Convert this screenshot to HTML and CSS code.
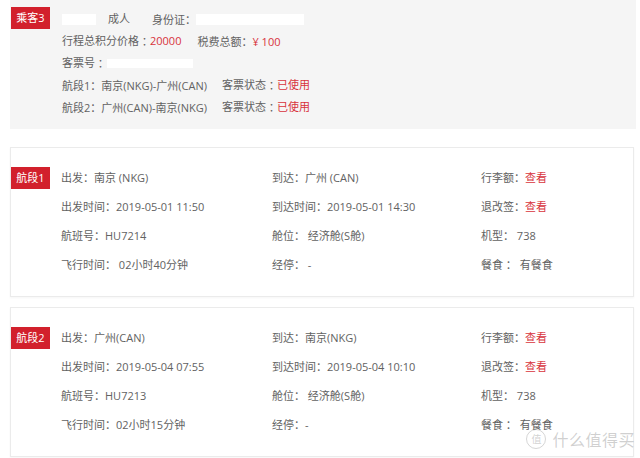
FILE: index.html
```html
<!DOCTYPE html>
<html lang="zh-CN">
<head>
<meta charset="utf-8">
<link rel="stylesheet" href="styles.css">
</head>
<body>
<div class="page">
  <section class="passenger">
    <div class="badge">乘客3</div>
    <div class="prows">
      <div class="prow"><span class="mask m1"></span><span class="gap1">成人</span><span class="gap2">身份证<span class="c">：</span></span><span class="mask m2"></span></div>
      <div class="prow">行程总积分价格<span class="c">：</span><span class="red">20000</span><span class="gap3">税费总额<span class="c">：</span><span class="red">¥ 100</span></span></div>
      <div class="prow">客票号<span class="c">：</span><span class="mask m3"></span></div>
      <div class="prow"><span class="seg">航段1<span class="c">：</span>南京(NKG)-广州(CAN)</span>客票状态<span class="c">：</span><span class="red">已使用</span></div>
      <div class="prow"><span class="seg">航段2<span class="c">：</span>广州(CAN)-南京(NKG)</span>客票状态<span class="c">：</span><span class="red">已使用</span></div>
    </div>
  </section>

  <section class="card">
    <div class="badge">航段1</div>
    <div class="grid">
      <div>出发<span class="c">：</span>南京 (NKG)</div>
      <div>到达<span class="c">：</span>广州 (CAN)</div>
      <div>行李额<span class="c">：</span><span class="red">查看</span></div>
      <div>出发时间<span class="c">：</span>2019-05-01 11:50</div>
      <div>到达时间<span class="c">：</span>2019-05-01 14:30</div>
      <div>退改签<span class="c">：</span><span class="red">查看</span></div>
      <div>航班号<span class="c">：</span>HU7214</div>
      <div>舱位<span class="c">：</span> 经济舱(S舱)</div>
      <div>机型<span class="c">：</span> 738</div>
      <div>飞行时间<span class="c">：</span> 02小时40分钟</div>
      <div>经停<span class="c">：</span> -</div>
      <div>餐食 <span class="c">：</span> 有餐食</div>
    </div>
  </section>

  <section class="card">
    <div class="badge">航段2</div>
    <div class="grid">
      <div>出发<span class="c">：</span>广州(CAN)</div>
      <div>到达<span class="c">：</span>南京(NKG)</div>
      <div>行李额<span class="c">：</span><span class="red">查看</span></div>
      <div>出发时间<span class="c">：</span>2019-05-04 07:55</div>
      <div>到达时间<span class="c">：</span>2019-05-04 10:10</div>
      <div>退改签<span class="c">：</span><span class="red">查看</span></div>
      <div>航班号<span class="c">：</span>HU7213</div>
      <div>舱位<span class="c">：</span> 经济舱(S舱)</div>
      <div>机型<span class="c">：</span> 738</div>
      <div>飞行时间<span class="c">：</span>02小时15分钟</div>
      <div>经停<span class="c">：</span>-</div>
      <div>餐食 <span class="c">：</span> 有餐食</div>
    </div>
  </section>
</div>
<div class="watermark"><span class="wm-icon">值</span><span class="wm-text">什么值得买</span></div>
</body>
</html>
```
FILE: styles.css
```css
html, body {
  margin: 0;
  padding: 0;
  background: #ffffff;
}
body {
  width: 640px;
  height: 458px;
  overflow: hidden;
  position: relative;
  font-family: "Open Sans", "Noto Sans CJK SC", sans-serif;
  font-size: 11px;
  color: #626262;
}
.page {
  padding-left: 10px;
  width: 626px;
}
.red { color: #d8333c; }
.c { font-family: "Noto Sans CJK TC", "Noto Sans CJK SC", sans-serif; }
.badge {
  flex: 0 0 auto;
  width: 39px;
  height: 22px;
  line-height: 22px;
  background: #d2202c;
  color: #ffffff;
  text-align: center;
  font-size: 11px;
}
.passenger {
  display: flex;
  gap: 12px;
  background: #f5f5f5;
  height: 129px;
  box-sizing: border-box;
  padding: 7px 0 0 1px;
}
.prows { padding-top: 1px; }
.prow {
  height: 22px;
  line-height: 22px;
  display: flex;
  align-items: center;
  white-space: nowrap;
}
.mask {
  display: inline-block;
  background: #ffffff;
  height: 11px;
}
.m1 { width: 34px; }
.m2 { width: 108px; }
.m3 { width: 86px; height: 9px; margin-left: 1px; }
.gap1 { margin-left: 12px; }
.gap2 { margin-left: 22px; }
.gap3 { margin-left: 16px; }
.seg { width: 160px; }
.card {
  display: flex;
  gap: 11px;
  margin-top: 18px;
  border: 1px solid #ebebeb;
  box-shadow: 0 1px 2px rgba(0,0,0,0.04);
  width: 624px;
  box-sizing: border-box;
  padding: 19px 0 17px 0;
  height: 150px;
}
.card + .card { margin-top: 10px; }
.grid {
  display: grid;
  grid-template-columns: 211px 209px 1fr;
  grid-auto-rows: 29px;
  line-height: 29px;
  margin-top: -4px;
  white-space: nowrap;
}
.watermark {
  position: absolute;
  right: 5px;
  bottom: 7px;
  display: flex;
  align-items: center;
  gap: 6px;
  color: rgba(120,120,120,0.35);
}
.wm-icon {
  width: 18px;
  height: 18px;
  border: 1.5px solid rgba(120,120,120,0.3);
  border-radius: 50%;
  font-size: 10px;
  line-height: 18px;
  text-align: center;
}
.wm-text {
  font-size: 16px;
  letter-spacing: 0.5px;
}
```
